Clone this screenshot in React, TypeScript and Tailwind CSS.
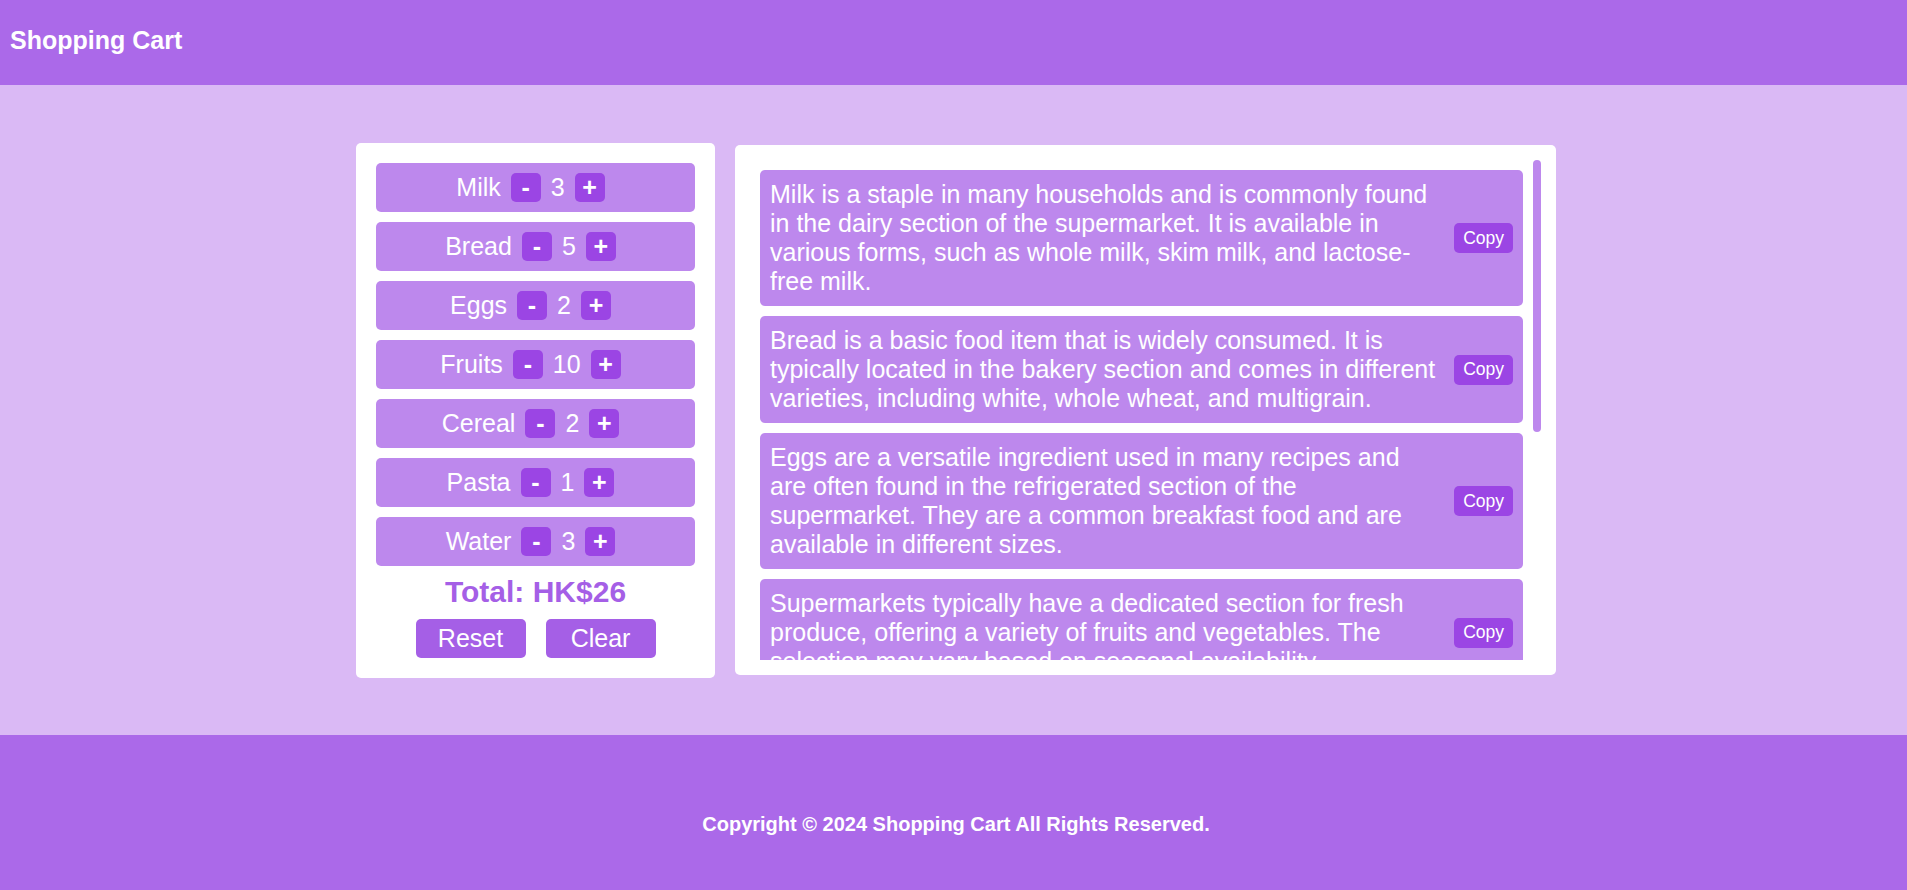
import { useState } from "react";

type Item = { name: string; qty: number; price: number };

const START: Item[] = [
  { name: "Milk", qty: 3, price: 2 },
  { name: "Bread", qty: 5, price: 1 },
  { name: "Eggs", qty: 2, price: 1 },
  { name: "Fruits", qty: 10, price: 1 },
  { name: "Cereal", qty: 2, price: 1 },
  { name: "Pasta", qty: 1, price: 1 },
  { name: "Water", qty: 3, price: 1 },
];

const NOTES = [
  "Milk is a staple in many households and is commonly found in the dairy section of the supermarket. It is available in various forms, such as whole milk, skim milk, and lactose-free milk.",
  "Bread is a basic food item that is widely consumed. It is typically located in the bakery section and comes in different varieties, including white, whole wheat, and multigrain.",
  "Eggs are a versatile ingredient used in many recipes and are often found in the refrigerated section of the supermarket. They are a common breakfast food and are available in different sizes.",
  "Supermarkets typically have a dedicated section for fresh produce, offering a variety of fruits and vegetables. The selection may vary based on seasonal availability.",
  "Cereal is a popular breakfast option that can be found in the breakfast aisle of the supermarket. There are many brands and flavors to choose from, including healthy whole grain options and sweetened varieties.",
  "Pasta is a versatile pantry staple that is usually found in the dry goods aisle. It comes in many shapes, such as spaghetti, penne, and fusilli.",
  "Bottled water is available in most supermarkets, usually near the beverages section. It comes in various sizes, including single bottles and multipacks.",
];

export default function App() {
  const [items, setItems] = useState<Item[]>(START);

  const change = (i: number, d: number) =>
    setItems((prev) =>
      prev.map((it, j) => (j === i ? { ...it, qty: Math.max(0, it.qty + d) } : it)),
    );

  const total = items.reduce((s, it) => s + it.qty * it.price, 0) - 3;

  return (
    <div className="font-['Liberation_Sans',Arial,sans-serif] text-white bg-[#dab9f5] min-h-[890px] leading-[normal]">
      {/* Header */}
      <header className="h-[85px] bg-[#ab69e9] pl-[10px] pt-[26px]">
        <h1 className="text-[25px] font-bold leading-[normal]">Shopping Cart</h1>
      </header>

      {/* Main */}
      <main className="h-[650px] flex items-center justify-center gap-[20px] pl-[5px]">
        {/* Cart */}
        <div className="w-[359px] bg-white rounded-[5px] p-[20px] flex flex-col items-center">
          <div className="w-full flex flex-col gap-[10px]">
            {items.map((it, i) => (
              <div
                key={it.name}
                className="h-[49px] bg-[#bd88ed] rounded-[5px] flex items-center justify-center text-[25px]"
              >
                <span className="mr-[10px]">{it.name}</span>
                <button
                  onClick={() => change(i, -1)}
                  className="mr-[10px] w-[30px] h-[29px] rounded-[5px] bg-[#9b45e4] flex items-center justify-center text-[25px] font-bold leading-none"
                >
                  -
                </button>
                <span className="mr-[10px]">{it.qty}</span>
                <button
                  onClick={() => change(i, 1)}
                  className="mr-[10px] w-[30px] h-[29px] rounded-[5px] bg-[#9b45e4] flex items-center justify-center text-[25px] font-bold leading-none"
                >
                  +
                </button>
              </div>
            ))}
          </div>
          <div className="mt-[9px] text-[30px] font-bold leading-[normal] text-[#a55fe6]">
            Total: HK${total}
          </div>
          <div className="mt-[10px] flex gap-[20px]">
            <button
              onClick={() => setItems(START)}
              className="w-[110px] h-[39px] rounded-[5px] bg-[#a55fe6] text-[25px]"
            >
              Reset
            </button>
            <button
              onClick={() => setItems((p) => p.map((it) => ({ ...it, qty: 0 })))}
              className="w-[110px] h-[39px] rounded-[5px] bg-[#a55fe6] text-[25px]"
            >
              Clear
            </button>
          </div>
        </div>

        {/* Notes */}
        <div className="w-[821px] bg-white rounded-[5px] p-[15px]">
          <div className="relative h-[500px]">
            <div className="h-full overflow-y-auto py-[10px] pl-[10px] pr-[18px] flex flex-col gap-[10px] [scrollbar-width:none]">
              {NOTES.map((n, i) => (
                <div
                  key={i}
                  className="shrink-0 bg-[#bd88ed] rounded-[5px] p-[10px] flex items-center gap-[12px]"
                >
                  <p className="flex-1 text-[25px] leading-[normal]">{n}</p>
                  <button className="shrink-0 h-[30px] px-[9px] rounded-[5px] bg-[#9b45e4] text-[17.5px]">
                    Copy
                  </button>
                </div>
              ))}
            </div>
            {/* scrollbar thumb */}
            <div className="absolute right-0 top-0 w-[8px] h-[272px] rounded-full bg-[#bd88ed]" />
          </div>
        </div>
      </main>

      {/* Footer */}
      <footer className="h-[155px] bg-[#ab69e9] pt-[78px] pl-[5px] text-center text-[20px] font-bold leading-[normal]">
        Copyright © 2024 Shopping Cart All Rights Reserved.
      </footer>
    </div>
  );
}
